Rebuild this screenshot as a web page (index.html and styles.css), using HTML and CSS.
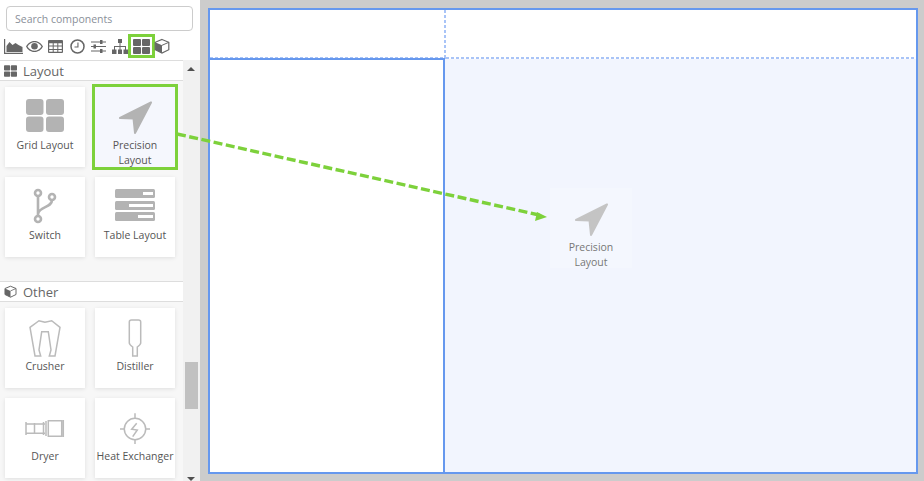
FILE: index.html
```html
<!DOCTYPE html>
<html lang="en">
<head>
  <meta charset="UTF-8">
  <title>Components</title>
  <link rel="stylesheet" href="styles.css">
</head>
<body>
  <svg width="0" height="0" class="defs">
    <symbol id="i-grid" viewBox="0 0 40 40">
      <rect x="1" y="2" width="17.5" height="16" rx="3"/>
      <rect x="21" y="2" width="18" height="16" rx="3"/>
      <rect x="1" y="19.5" width="17.5" height="15.5" rx="3"/>
      <rect x="21" y="19.5" width="18" height="15.5" rx="3"/>
    </symbol>
    <symbol id="i-arrow" viewBox="0 0 40 40">
      <path d="M36 5.5 L5 21 L18.5 21.5 L20 36 Z" stroke-width="2" stroke-linejoin="round"/>
    </symbol>
    <symbol id="i-cube" viewBox="0 0 16 16">
      <path d="M8 1.500 L14.800 4.300 V11.700 L8 15 L1.200 11.700 V4.300 Z" fill="none" stroke-width="1.200"/>
      <path d="M1.200 4.300 L8 7.300 V15 L1.200 11.700 Z" stroke="none"/>
      <path d="M8 7.300 L14.800 4.300" fill="none" stroke-width="1"/>
    </symbol>
  </svg>

  <aside class="sidebar">
    <input class="search" type="text" placeholder="Search components">

    <div class="toolbar">
      <span class="tool">
        <svg width="19" height="15" viewBox="0 0 19 15"><path d="M0 0h1.200v13.800H19V15H0z"/><path d="M2.500 13V7l3-4 3 3 3-2 3 2 4 2v5z"/></svg>
      </span>
      <span class="tool">
        <svg width="17" height="11" viewBox="0 0 17 11"><path fill-rule="evenodd" d="M8.500 0C12.500 0 15.500 2.500 17 5.500 15.500 8.500 12.500 11 8.500 11S1.500 8.500 0 5.500C1.500 2.500 4.500 0 8.500 0zM8.500 1.200C5.500 1.200 3 3 1.500 5.500 3 8 5.500 9.800 8.500 9.800S14 8 15.500 5.500C14 3 11.500 1.200 8.500 1.200z"/><circle cx="8.500" cy="5.200" r="3.300"/></svg>
      </span>
      <span class="tool">
        <svg width="15" height="13" viewBox="0 0 15 13"><path fill-rule="evenodd" d="M1 0h13a1 1 0 0 1 1 1v11a1 1 0 0 1-1 1H1a1 1 0 0 1-1-1V1a1 1 0 0 1 1-1zM1.200 3.200v2.400h3.500V3.200zM5.700 3.200v2.400h3.600V3.200zM10.300 3.200v2.400h3.500V3.200zM1.200 6.600V9h3.500V6.600zM5.700 6.600V9h3.600V6.600zM10.300 6.600V9h3.500V6.600zM1.200 10v1.800h3.500V10zM5.700 10v1.800h3.600V10zM10.300 10v1.800h3.500V10z"/></svg>
      </span>
      <span class="tool">
        <svg width="15" height="15" viewBox="0 0 15 15"><circle cx="7.500" cy="7.500" r="6.500" fill="none" stroke="#666" stroke-width="1.500"/><path d="M7.400 3.500h1.100v5H4.500V7.400h2.900z"/></svg>
      </span>
      <span class="tool">
        <svg width="15" height="13" viewBox="0 0 15 13"><path d="M0 1.500h9V0h2.500v1.500H15v1h-3.500V4H9V2.500H0zM0 6h2.500V4.500H5V6h10v1H5v1.500H2.500V7H0zM0 10.500h9V9h2.500v1.500H15v1h-3.500V13H9v-1.500H0z"/></svg>
      </span>
      <span class="tool">
        <svg width="16" height="15" viewBox="0 0 16 15"><path d="M6 0h4v4H8.500v3H14v3.500h2V15h-4.500v-4.500h1.500V8H8.500v2.500h1.500V15H6v-4.500h1.500V8H3v2.500h1.500V15H0v-4.500h2V7h5.500V4H6z"/></svg>
      </span>
      <span class="tool tool-on">
        <svg width="17" height="15" viewBox="0 0 17 15"><rect width="8" height="7" rx="1"/><rect x="9" width="8" height="7" rx="1"/><rect y="8" width="8" height="7" rx="1"/><rect x="9" y="8" width="8" height="7" rx="1"/></svg>
      </span>
      <span class="tool tool-cube">
        <svg width="16" height="16"><use href="#i-cube"/></svg>
      </span>
    </div>

    <div class="panel">
      <div class="list">
        <h3 class="group-title">
          <svg width="13" height="12" viewBox="0 0 17 15"><rect width="8" height="7" rx="1"/><rect x="9" width="8" height="7" rx="1"/><rect y="8" width="8" height="7" rx="1"/><rect x="9" y="8" width="8" height="7" rx="1"/></svg>
          Layout
        </h3>
        <div class="cards">
          <div class="card">
            <svg class="icon" width="40" height="40"><use href="#i-grid"/></svg>
            <span>Grid Layout</span>
          </div>
          <div class="card card-on">
            <svg class="icon" width="40" height="40"><use href="#i-arrow"/></svg>
            <span>Precision Layout</span>
          </div>
          <div class="card">
            <svg class="icon" width="40" height="40" viewBox="0 0 40 40">
              <g fill="none" stroke="#b3b3b3" stroke-width="2.600">
                <circle cx="13" cy="6" r="3"/>
                <circle cx="27" cy="10" r="3"/>
                <circle cx="13" cy="32" r="3"/>
                <path d="M13 9 V29 M27 13 C27 21 14 19 13 27"/>
              </g>
            </svg>
            <span>Switch</span>
          </div>
          <div class="card">
            <svg class="icon" width="40" height="40" viewBox="0 0 40 40">
              <rect y="2" width="40" height="9" rx="1.500"/>
              <rect y="14" width="40" height="9" rx="1.500"/>
              <rect y="25" width="40" height="9" rx="1.500"/>
              <g fill="#fff">
                <rect x="28" y="5" width="10" height="3"/>
                <rect x="14" y="17" width="24" height="3"/>
                <rect x="23" y="28" width="15" height="3"/>
              </g>
            </svg>
            <span>Table Layout</span>
          </div>
        </div>

        <h3 class="group-title group-other">
          <svg width="13" height="13"><use href="#i-cube"/></svg>
          Other
        </h3>
        <div class="cards">
          <div class="card">
            <svg class="icon line" width="40" height="40" viewBox="0 0 40 40">
              <path d="M20 4.300 L14 2.700 L5 9.300 L10 38 H15.700 L14 32 L16.700 13.700 H23.300 L26 32 L24.300 38 H30 L35 9.300 L26.700 2.700 Z"/>
            </svg>
            <span>Crusher</span>
          </div>
          <div class="card">
            <svg class="icon line" width="40" height="40" viewBox="0 0 40 40">
              <path d="M16.500 2 H23.500 Q25.700 2 25.700 4 V25 Q25.700 26.500 22.300 29 V38 H17.700 V29 Q14.300 26.500 14.300 25 V4 Q14.300 2 16.500 2 Z"/>
            </svg>
            <span>Distiller</span>
          </div>
          <div class="card">
            <svg class="icon line" width="40" height="40" viewBox="0 0 40 40">
              <path d="M1 16 H20 M1 25.300 H20"/>
              <path d="M1 14 V27 M9.500 15 V26 M18.500 14 V27 M21 13 V28 M23.300 12.700 V28.300 H36.700 V12.700 Z M38.300 12 V29"/>
            </svg>
            <span>Dryer</span>
          </div>
          <div class="card">
            <svg class="icon line" width="40" height="40" viewBox="0 0 40 40">
              <circle cx="20" cy="21" r="10.700"/>
              <path d="M20 5.300 V10.300 M20 31.700 V36 M5 21 H9.300 M30.700 21 H35"/>
              <path d="M21.700 15.300 L16.700 21.300 L22.300 22 L17.700 28.700"/>
            </svg>
            <span>Heat Exchanger</span>
          </div>
        </div>
      </div>

      <div class="scrollbar">
        <div class="thumb"></div>
      </div>
    </div>
  </aside>

  <main class="canvas">
    <div class="frame">
      <div class="cell cell-a"></div>
      <div class="cell cell-b"></div>
      <div class="cell cell-c"></div>
      <div class="cell cell-d"></div>
    </div>

    <div class="ghost">
      <svg class="icon" width="40" height="40"><use href="#i-arrow"/></svg>
      <span>Precision Layout</span>
    </div>
  </main>

  <svg class="drag-line" width="924" height="481" viewBox="0 0 924 481">
    <line x1="177" y1="134" x2="539" y2="215" stroke="#7dd13b" stroke-width="3.400" stroke-dasharray="9 3.500"/>
    <path d="M547 217 L537 212 L535 221 Z" fill="#7dd13b"/>
  </svg>
</body>
</html>
```

FILE: styles.css
```css
:root {
  --green: #7dd13b;
  --blue: #6698ee;
  --dash: #a9c4f7;
  --grey-icon: #b3b3b3;
  --text-color: #555;
}

* {
  margin: 0;
  padding: 0;
  box-sizing: border-box;
}

body {
  font-family: 'Open Sans', sans-serif;
  color: var(--text-color);
  display: flex;
  width: 924px;
  height: 481px;
  overflow: hidden;
  background: #ccc;
}

.defs {
  position: absolute;
}

.sidebar {
  width: 200px;
  height: 481px;
  flex: none;
  background: #fff;
  display: flex;
  flex-direction: column;
  overflow: hidden;
}

.search {
  width: 187px;
  height: 25px;
  margin: 6px 0 0 6px;
  padding: 0 8px;
  border: 1px solid #ccc;
  border-radius: 4px;
  font-family: inherit;
  font-size: 10.500px;
  outline: none;
}

.search::placeholder {
  color: #8a8f99;
}

.toolbar {
  display: flex;
  align-items: center;
  height: 24px;
  margin-top: 3px;
  padding-left: 2.500px;
}

.tool {
  width: 21.400px;
  height: 18px;
  display: flex;
  align-items: center;
  justify-content: center;
  flex: none;
}

.tool svg {
  fill: #666;
  stroke: #666;
  stroke-width: 0;
}

.tool-on {
  outline: 3px solid var(--green);
}

.tool-cube {
  margin-left: -1px;
}

.panel {
  display: flex;
  flex: 1;
  min-height: 0;
  margin-top: 2px;
  background: #f1f1f1;
}

.list {
  width: 183px;
  flex: none;
  background: #f7f7f7;
}

.group-title {
  display: flex;
  align-items: center;
  gap: 6px;
  height: 21px;
  padding-left: 4px;
  background: #fff;
  border-top: 1px solid #ddd;
  border-bottom: 1px solid #ddd;
  font-size: 13px;
  font-weight: 400;
  color: #666;
}

.group-title svg {
  fill: #666;
  stroke: #666;
  stroke-width: 0;
}

.group-other {
  margin-top: 24px;
}

.cards {
  display: grid;
  grid-template-columns: 80px 80px;
  grid-auto-rows: 80px;
  gap: 10px;
  padding: 6px 0 0 5px;
}

.card,
.ghost {
  display: flex;
  flex-direction: column;
  align-items: center;
  padding-top: 10px;
  font-size: 10.500px;
  line-height: 15px;
  text-align: center;
}

.card {
  background: #fff;
  box-shadow: 0 1px 4px rgba(0, 0, 0, 0.1);
}

.card-on {
  background: #f5f7fd;
  outline: 3px solid var(--green);
  box-shadow: none;
}

.icon {
  flex: none;
  margin-bottom: 1px;
  fill: var(--grey-icon);
  stroke: var(--grey-icon);
  stroke-width: 0;
}

.line {
  fill: none;
  stroke: #bbb;
  stroke-width: 1.500;
}

.scrollbar {
  flex: 1;
  padding: 302px 2px 0;
  position: relative;
}

.scrollbar::before,
.scrollbar::after {
  content: "";
  position: absolute;
  left: 4px;
  border-left: 4px solid transparent;
  border-right: 4px solid transparent;
}

.scrollbar::before {
  top: 7px;
  border-bottom: 4px solid #505050;
}

.scrollbar::after {
  top: 417px;
  border-top: 4px solid #505050;
}

.thumb {
  width: 13px;
  height: 47px;
  background: #c1c1c1;
}

.canvas {
  flex: 1;
  padding: 8px 6px 7px 8px;
  position: relative;
}

.frame {
  height: 466px;
  border: 2px solid var(--blue);
  background: #fff;
  display: grid;
  grid-template-columns: 236px 1fr;
  grid-template-rows: 49px 1fr;
}

.cell-a {
  background:
    repeating-linear-gradient(to bottom, var(--dash) 0 3px, transparent 3px 5px) right top / 2px 100% no-repeat,
    repeating-linear-gradient(to right, var(--dash) 0 3px, transparent 3px 5px) left bottom / 100% 2px no-repeat;
}

.cell-b {
  background: repeating-linear-gradient(to right, var(--dash) 0 3px, transparent 3px 5px) left bottom / 100% 2px no-repeat;
}

.cell-c {
  border: solid var(--blue);
  border-width: 2px 2px 0 0;
  margin: -1px 1px 0 0;
  position: relative;
}

.cell-d {
  background: #f2f5fe;
  margin-left: -1px;
}

.ghost {
  position: absolute;
  left: 350px;
  top: 188px;
  width: 82px;
  height: 80px;
  padding: 11px 10px 0;
  background: #f4f7fe;
  color: #777;
}

.ghost .icon {
  fill: #c4c4c4;
  stroke: #c4c4c4;
}

.drag-line {
  position: absolute;
  left: 0;
  top: 0;
  pointer-events: none;
}
```
